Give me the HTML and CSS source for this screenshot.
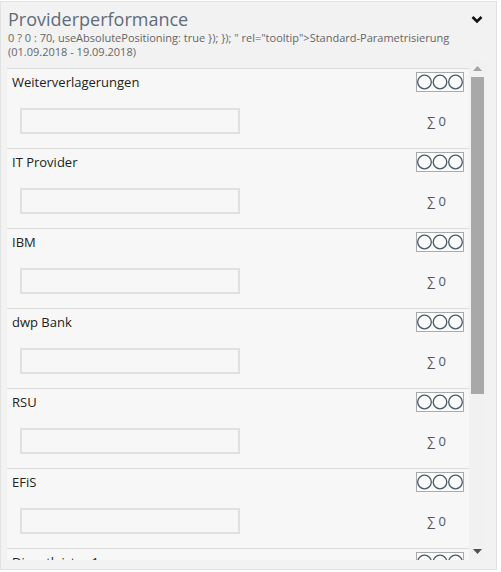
FILE: index.html
```html
<!DOCTYPE html>
<html>
<head>
<meta charset="utf-8">
<link rel="stylesheet" href="styles.css">
</head>
<body>
<div class="panel">
  <div class="header">
    <div class="head-text">
      <div class="title">Providerperformance</div>
      <div class="sub">0 ? 0 : 70, useAbsolutePositioning: true }); }); " rel="tooltip"&gt;Standard-Parametrisierung<br>(01.09.2018 - 19.09.2018)</div>
    </div>
    <svg class="chev" width="12" height="10" viewBox="0 0 12 10"><path d="M1.5 2 L6 6.5 L10.5 2" fill="none" stroke="#111" stroke-width="2.6"/></svg>
  </div>
  <div class="scroller">
    <div class="list">
      <div class="row"><div class="row-top"><span class="name">Weiterverlagerungen</span><span class="box"><svg width="46" height="18" viewBox="0 0 46 18"><circle cx="7.5" cy="9" r="6.8"/><circle cx="23" cy="9" r="6.8"/><circle cx="38.5" cy="9" r="6.8"/></svg></span></div><div class="row-bottom"><span class="inp"></span><span class="sum">∑ 0</span></div></div>
      <div class="row"><div class="row-top"><span class="name">IT Provider</span><span class="box"><svg width="46" height="18" viewBox="0 0 46 18"><circle cx="7.5" cy="9" r="6.8"/><circle cx="23" cy="9" r="6.8"/><circle cx="38.5" cy="9" r="6.8"/></svg></span></div><div class="row-bottom"><span class="inp"></span><span class="sum">∑ 0</span></div></div>
      <div class="row"><div class="row-top"><span class="name">IBM</span><span class="box"><svg width="46" height="18" viewBox="0 0 46 18"><circle cx="7.5" cy="9" r="6.8"/><circle cx="23" cy="9" r="6.8"/><circle cx="38.5" cy="9" r="6.8"/></svg></span></div><div class="row-bottom"><span class="inp"></span><span class="sum">∑ 0</span></div></div>
      <div class="row"><div class="row-top"><span class="name">dwp Bank</span><span class="box"><svg width="46" height="18" viewBox="0 0 46 18"><circle cx="7.5" cy="9" r="6.8"/><circle cx="23" cy="9" r="6.8"/><circle cx="38.5" cy="9" r="6.8"/></svg></span></div><div class="row-bottom"><span class="inp"></span><span class="sum">∑ 0</span></div></div>
      <div class="row"><div class="row-top"><span class="name">RSU</span><span class="box"><svg width="46" height="18" viewBox="0 0 46 18"><circle cx="7.5" cy="9" r="6.8"/><circle cx="23" cy="9" r="6.8"/><circle cx="38.5" cy="9" r="6.8"/></svg></span></div><div class="row-bottom"><span class="inp"></span><span class="sum">∑ 0</span></div></div>
      <div class="row"><div class="row-top"><span class="name">EFiS</span><span class="box"><svg width="46" height="18" viewBox="0 0 46 18"><circle cx="7.5" cy="9" r="6.8"/><circle cx="23" cy="9" r="6.8"/><circle cx="38.5" cy="9" r="6.8"/></svg></span></div><div class="row-bottom"><span class="inp"></span><span class="sum">∑ 0</span></div></div>
      <div class="row"><div class="row-top"><span class="name">Dienstleister 1</span><span class="box"><svg width="46" height="18" viewBox="0 0 46 18"><circle cx="7.5" cy="9" r="6.8"/><circle cx="23" cy="9" r="6.8"/><circle cx="38.5" cy="9" r="6.8"/></svg></span></div><div class="row-bottom"><span class="inp"></span><span class="sum">∑ 0</span></div></div>
    </div>
    <div class="sbar">
      <div class="sbtn"><svg width="9" height="5" viewBox="0 0 9 5"><path d="M0 5 L4.5 0 L9 5Z" fill="#a3a3a3"/></svg></div>
      <div class="track"><div class="thumb"></div></div>
      <div class="sbtn"><svg width="9" height="5" viewBox="0 0 9 5"><path d="M0 0 L4.5 5 L9 0Z" fill="#505050"/></svg></div>
    </div>
  </div>
</div>
</body>
</html>
```
FILE: styles.css
```css
html, body { margin: 0; padding: 0; background: #fff; }
body { font-family: "Open Sans", "Liberation Sans", sans-serif; }
.panel {
  margin-top: 1px;
  width: 495px;
  height: 567px;
  border: 1px solid #e2e2e2;
  background: #f2f2f2;
  display: flex;
  flex-direction: column;
}
.header {
  display: flex;
  justify-content: space-between;
  align-items: flex-start;
  padding: 6px 13px 0 7px;
  height: 52px;
}
.title { font-size: 18px; line-height: 23px; color: #5e6c7b; }
.sub { font-size: 11px; line-height: 14px; color: #666; }
.chev { margin-top: 7px; }
.scroller {
  display: flex;
  height: 500px;
  overflow: hidden;
  padding-left: 6px;
}
.list {
  width: 462px;
  padding-top: 8px;
  overflow: hidden;
}
.row {
  box-sizing: border-box;
  height: 80px;
  background: #f7f7f7;
  border-bottom: 1px solid #dcdcdc;
  padding: 3px 5px 0 5px;
}
.row:first-child { height: 81px; border-top: 1px solid #dcdcdc; }
.row-top { display: flex; justify-content: space-between; align-items: flex-start; height: 20px; }
.name { font-size: 13px; line-height: 20px; color: #222; }
.box {
  box-sizing: border-box;
  width: 48px; height: 20px;
  border: 1px solid #aaa;
  background: #fbfbfb;
  display: flex;
}
.box circle { fill: none; stroke: #4b5a6c; stroke-width: 1.3; }
.row-bottom { display: flex; align-items: center; margin-top: 16px; height: 26px; }
.inp {
  box-sizing: border-box;
  width: 220px; height: 26px;
  margin-left: 8px;
  border: 2px solid #e0e0e0;
  background: #f7f7f7;
}
.sum { margin-left: auto; margin-right: 18px; font-size: 13px; color: #555; }
.sbar {
  width: 17px;
  background: #f1f1f1;
  display: flex;
  flex-direction: column;
}
.sbtn { height: 17px; display: flex; align-items: center; justify-content: center; }
.track { flex: 1; padding: 0 2px; }
.thumb { height: 317px; background: #a8a8a8; }
```
